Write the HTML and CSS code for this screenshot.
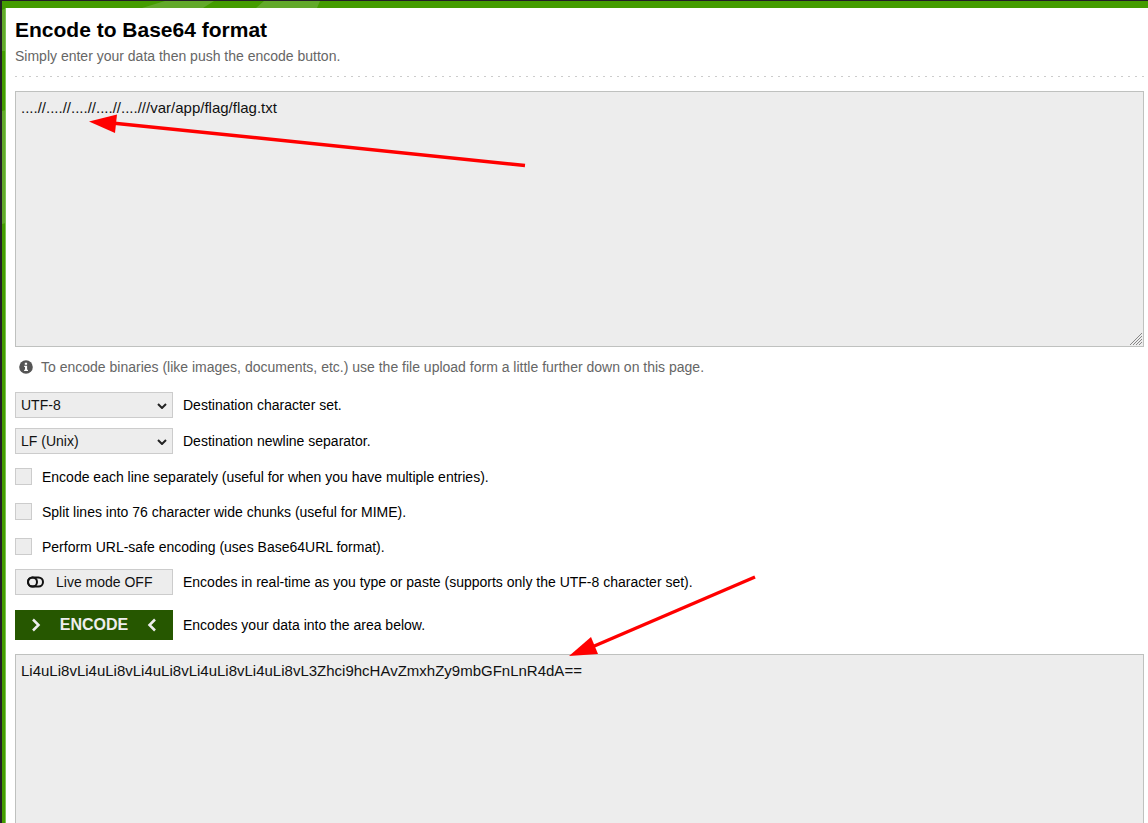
FILE: index.html
```html
<!DOCTYPE html>
<html lang="en">
<head>
<meta charset="utf-8">
<title>Base64 Encode</title>
<link rel="stylesheet" href="styles.css">
</head>
<body>
<div class="frame">
  <svg class="pattern" width="330" height="230" aria-hidden="true">
    <path d="M142 8 165 1h49l-11 7zM256 8l8-7h56l-3 7zM2 10l4-2v43H2zM2 111l4-1v113l-4 1z"/>
  </svg>
  <main class="panel">
    <h1 class="title">Encode to Base64 format</h1>
    <p class="subtitle">Simply enter your data then push the encode button.</p>
    <div class="divider"></div>
    <form class="form">
      <div class="source">
        <textarea class="area" id="input" aria-label="Data to encode" spellcheck="false">....//....//....//....//....///var/app/flag/flag.txt</textarea>
        <svg class="grip" viewBox="0 0 14 14" aria-hidden="true"><path d="M1 13 13 1M4 13 13 4M7 13l6-6M10 13l3-3"/></svg>
      </div>
      <p class="hint">
        <svg class="info" viewBox="0 0 14 14" aria-hidden="true"><circle cx="7" cy="7" r="6.8" fill="#555"/><path d="M5.8 2.7h2.3v2H5.8zM5.2 5.8h2.9v3.9h.9V11H5.1V9.700h.9V7.100h-.8z" fill="#fff"/></svg>
        To encode binaries (like images, documents, etc.) use the file upload form a little further down on this page.
      </p>
      <div class="rows">
        <div class="row">
          <span class="pick"><select class="select" id="charset"><option>UTF-8</option></select><svg class="caret" viewBox="0 0 10 6" aria-hidden="true"><path d="m1 1 4 4 4-4"/></svg></span>
          <label for="charset">Destination character set.</label>
        </div>
        <div class="row">
          <span class="pick"><select class="select" id="newline"><option>LF (Unix)</option></select><svg class="caret" viewBox="0 0 10 6" aria-hidden="true"><path d="m1 1 4 4 4-4"/></svg></span>
          <label for="newline">Destination newline separator.</label>
        </div>
        <div class="row row-check">
          <input class="check" type="checkbox" id="lines">
          <label for="lines">Encode each line separately (useful for when you have multiple entries).</label>
        </div>
        <div class="row row-check">
          <input class="check" type="checkbox" id="chunks">
          <label for="chunks">Split lines into 76 character wide chunks (useful for MIME).</label>
        </div>
        <div class="row row-check">
          <input class="check" type="checkbox" id="urlsafe">
          <label for="urlsafe">Perform URL-safe encoding (uses Base64URL format).</label>
        </div>
        <div class="row">
          <button class="live" type="button"><svg class="toggle" viewBox="0 0 17 12" aria-hidden="true"><rect x="1" y="1.500" width="15" height="9" rx="4.500"/><circle cx="5.500" cy="6" r="4.500"/></svg>Live mode OFF</button>
          <span>Encodes in real-time as you type or paste (supports only the UTF-8 character set).</span>
        </div>
      </div>
      <div class="row row-encode">
        <button class="encode" type="button"><svg class="chevron" viewBox="0 0 10 14" aria-hidden="true"><path d="m2 1.500 5.500 5.500L2 12.500"/></svg>ENCODE<svg class="chevron" viewBox="0 0 10 14" aria-hidden="true"><path d="M8 1.500 2.500 7 8 12.500"/></svg></button>
        <span>Encodes your data into the area below.</span>
      </div>
      <textarea class="area" id="output" aria-label="Encoded result" spellcheck="false">Li4uLi8vLi4uLi8vLi4uLi8vLi4uLi8vLi4uLi8vL3Zhci9hcHAvZmxhZy9mbGFnLnR4dA==</textarea>
    </form>
  </main>
  <svg class="marks" width="760" height="660" aria-hidden="true">
    <g stroke="#f00" stroke-width="3.500"><path d="M525 165.500 112 123"/><path d="M755 577 592 647"/></g>
    <g fill="#f00"><path d="M89 121.500 117 114.500 115 133z"/><path d="M569 656 591 637 598 654z"/></g>
  </svg>
</div>
</body>
</html>
```
FILE: styles.css
```css
* {
  box-sizing: border-box;
}

body {
  margin: 0;
  background: #231f26;
  color: #000;
  font-family: "Liberation Sans", Arial, sans-serif;
  font-size: 14px;
  line-height: 20px;
}

.frame {
  position: relative;
  height: 100vh;
  overflow: hidden;
  padding: 7px 0 0 3px;
  border-top: 1px solid #231f26;
  border-left: 2px solid #231f26;
  background: #449c00;
}

.pattern,
.marks {
  position: absolute;
  top: -1px;
  left: -2px;
  pointer-events: none;
}

.pattern {
  fill: #62a92a;
}

.panel {
  position: relative;
  padding: 8px 4px 0 9px;
  border-left: 1px solid #7cc653;
  background: #fff;
}

.title {
  margin: 0;
  font-size: 21px;
  line-height: 28px;
}

.subtitle {
  margin: 2px 0 10px;
  color: #666;
}

.divider {
  height: 1px;
  background: repeating-linear-gradient(90deg, #ccc 0 2px, transparent 2px 7px);
}

.form {
  padding-top: 14px;
}

.source {
  position: relative;
}

.area {
  display: block;
  width: 100%;
  height: 256px;
  padding: 7px 5px;
  border: 1px solid #bfc1bf;
  border-radius: 0;
  outline: 0;
  resize: none;
  background: #ededed;
  color: #111;
  font: 15px/17px "Liberation Sans", Arial, sans-serif;
}

.grip {
  position: absolute;
  right: 1px;
  bottom: 1px;
  width: 14px;
  height: 14px;
  fill: none;
  stroke: #888;
}

.hint {
  display: flex;
  align-items: center;
  gap: 8px;
  margin: 10px 0 15px;
  padding-left: 4px;
  color: #666;
}

.info {
  width: 14px;
  height: 14px;
}

.rows {
  display: grid;
  gap: 10px;
}

.row {
  display: flex;
  align-items: center;
  gap: 10px;
  min-height: 26px;
}

.row-check {
  min-height: 25px;
}

.row-encode {
  margin: 15px 0 14px;
}

.pick {
  position: relative;
  width: 158px;
}

.select,
.live {
  display: block;
  width: 158px;
  height: 26px;
  border: 1px solid #ccc;
  border-radius: 0;
  background: #ededed;
  color: #111;
  font: inherit;
}

.select {
  appearance: none;
  padding: 0 5px;
}

.caret {
  position: absolute;
  top: 11px;
  right: 6px;
  width: 10px;
  height: 6px;
  fill: none;
  stroke: #222;
  stroke-width: 2;
  pointer-events: none;
}

.check {
  width: 17px;
  height: 17px;
  margin: 0;
  border: 1px solid #ccc;
  appearance: none;
  background: #ededed;
}

.live {
  display: flex;
  align-items: center;
  gap: 12px;
  padding: 0 11px;
}

.toggle {
  width: 17px;
  height: 12px;
  fill: none;
  stroke: #111;
  stroke-width: 2;
}

.encode {
  display: flex;
  align-items: center;
  justify-content: space-between;
  width: 158px;
  height: 30px;
  padding: 0 16px;
  border: 0;
  background: #265700;
  color: #eee;
  font: bold 16px/20px "Liberation Sans", Arial, sans-serif;
}

.chevron {
  width: 10px;
  height: 14px;
  fill: none;
  stroke: #eee;
  stroke-width: 2.500;
}
```
